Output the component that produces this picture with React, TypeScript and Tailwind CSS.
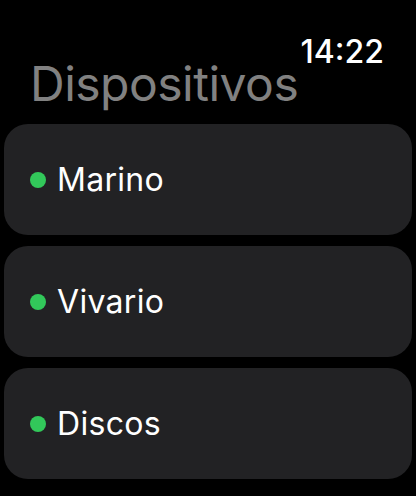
const DEVICES = [
  { id: 1, name: 'Marino' },
  { id: 2, name: 'Vivario' },
  { id: 3, name: 'Discos' },
];

export default function App() {
  return (
    <div
      className="w-[416px] h-[496px] bg-black overflow-hidden text-white"
      style={{ fontFamily: 'Inter, "Noto Sans", sans-serif' }}
    >
      <div className="pt-[36px] pr-[32px] flex justify-end">
        <span className="text-[32px] leading-[32px] font-medium">14:22</span>
      </div>
      <h1 className="mt-[-8px] pl-[30px] text-[48px] leading-[48px] tracking-[-0.5px] text-[#818181]">
        Dispositivos
      </h1>
      <div className="mt-[16px] px-[4px] flex flex-col gap-[11px]">
        {DEVICES.map((d) => (
          <div
            key={d.id}
            className="h-[111px] w-[408px] rounded-[24px] bg-[#222224] flex items-center pl-[26px] gap-[11px]"
          >
            <div className="w-[16px] h-[16px] rounded-full bg-[#32c85a]" />
            <span className="text-[32px] leading-[32px] tracking-[0.3px]">{d.name}</span>
          </div>
        ))}
      </div>
    </div>
  );
}
